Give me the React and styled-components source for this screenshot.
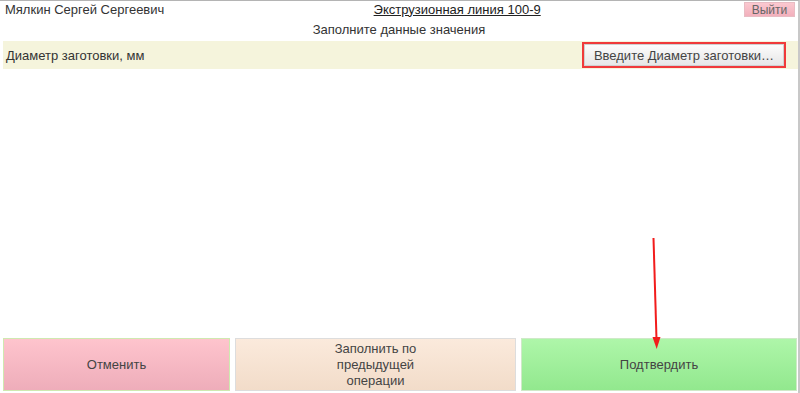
import React from 'react'
import styled, { createGlobalStyle } from 'styled-components'

const GlobalStyle = createGlobalStyle`
  html, body {
    margin: 0;
    padding: 0;
    background: #fff;
  }
  body {
    font-family: "Liberation Sans", Arial, sans-serif;
    font-size: 13px;
    color: #333;
  }
`

const Page = styled.div`
  position: relative;
  width: 800px;
  height: 393px;
  box-sizing: border-box;
  border-top: 1px solid #b4b4b4;
  border-right: 2px solid #c8c8c8;
  display: flex;
  flex-direction: column;
`

const Header = styled.div`
  display: flex;
  align-items: center;
  height: 16px;
  padding: 0 3px 0 5px;
`

const UserName = styled.div`
  white-space: nowrap;
  color: #333;
`

const Title = styled.div`
  flex: 1;
  text-align: center;
  padding-left: 6px;
  text-decoration: underline;
  color: #222;
`

const ExitButton = styled.button`
  width: 51px;
  height: 15px;
  padding: 0;
  border: 1px solid #e8bcc3;
  background: linear-gradient(#fbc8d0, #f2b0bc);
  font-family: inherit;
  font-size: 12px;
  color: #666;
`

const Prompt = styled.div`
  text-align: center;
  padding: 6px 0 5px;
  line-height: 13px;
`

const FieldRow = styled.div`
  display: flex;
  align-items: center;
  justify-content: space-between;
  height: 28px;
  margin: 0 0 0 3px;
  padding: 0 12px 0 3px;
  background: #f5f4dc;
`

const FieldButton = styled.button`
  width: 204px;
  height: 26px;
  box-sizing: border-box;
  border: 2px solid #f03a3a;
  background: linear-gradient(#fdfdfd, #e6e6e6);
  box-shadow: inset 0 0 0 1px #d0d0d0;
  font-family: inherit;
  font-size: 13px;
  color: #444;
  padding: 0;
`

const Body = styled.div`
  flex: 1;
`

const Footer = styled.div`
  display: grid;
  grid-template-columns: 227px 281px 1fr;
  gap: 5px;
  padding: 0 1px 2px 3px;
`

const tones = {
  cancel: {
    bg: 'linear-gradient(#fec4cd, #eeadba)',
    border: '#cfe9b0',
  },
  fill: {
    bg: 'linear-gradient(#fbeadc, #f2dcc9)',
    border: '#dddddd',
  },
  confirm: {
    bg: 'linear-gradient(#aef6a9, #92e88e)',
    border: '#cfe9c8',
  },
}

const ActionButton = styled.button`
  height: 53px;
  border: 1px solid ${p => tones[p.$tone].border};
  background: ${p => tones[p.$tone].bg};
  font-family: inherit;
  font-size: 13px;
  line-height: 16px;
  color: #444;
  display: flex;
  align-items: center;
  justify-content: center;
  padding: 0;
`

const Label = styled.span`
  max-width: 110px;
  text-align: center;
`

const Arrow = styled.svg`
  position: absolute;
  left: 645px;
  top: 232px;
  pointer-events: none;
`

export default function App() {
  return (
    <>
      <GlobalStyle />
      <Page>
        <Header>
          <UserName>Мялкин Сергей Сергеевич</UserName>
          <Title>Экструзионная линия 100-9</Title>
          <ExitButton>Выйти</ExitButton>
        </Header>
        <Prompt>Заполните данные значения</Prompt>
        <FieldRow>
          <span>Диаметр заготовки, мм</span>
          <FieldButton>Введите Диаметр заготовки…</FieldButton>
        </FieldRow>
        <Body />
        <Footer>
          <ActionButton $tone="cancel">Отменить</ActionButton>
          <ActionButton $tone="fill">
            <Label>Заполнить по предыдущей операции</Label>
          </ActionButton>
          <ActionButton $tone="confirm">Подтвердить</ActionButton>
        </Footer>
        <Arrow width="20" height="120" viewBox="0 0 20 120">
          <line x1="8.5" y1="5" x2="11.5" y2="106" stroke="#f21c1c" strokeWidth="2" />
          <polygon points="7.5,104 15.5,104 11.7,116" fill="#f21c1c" />
        </Arrow>
      </Page>
    </>
  )
}
